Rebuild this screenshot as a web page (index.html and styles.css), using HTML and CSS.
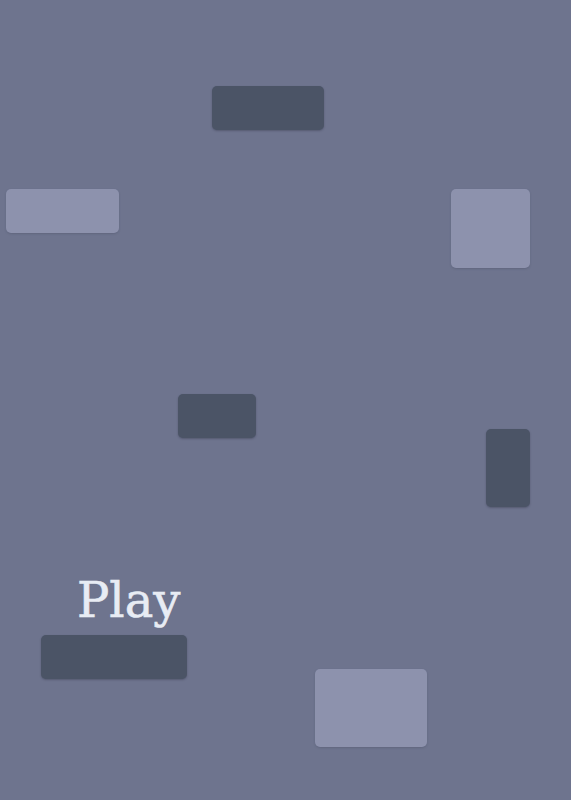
FILE: index.html
```html
<!DOCTYPE html>
<html lang="en">
<head>
  <meta charset="UTF-8">
  <title>Blocks</title>
  <link rel="stylesheet" href="styles.css">
</head>
<body>
  <div class="board">
    <div class="piece dark" style="left:212px; top:86px; width:112px; height:44px;"></div>
    <div class="piece light" style="left:6px; top:189px; width:113px; height:44px;"></div>
    <div class="piece light" style="left:451px; top:189px; width:79px; height:79px;"></div>
    <div class="piece dark" style="left:178px; top:394px; width:78px; height:44px;"></div>
    <div class="piece dark" style="left:486px; top:429px; width:44px; height:78px;"></div>
    <div class="piece light" style="left:315px; top:669px; width:112px; height:78px;"></div>

    <div class="start">
      <div class="start-label">Play</div>
      <div class="piece dark start-bar"></div>
    </div>
  </div>
</body>
</html>
```

FILE: styles.css
```css
body {
  margin: 0;
  background: #6e748e;
  font-family: 'DejaVu Serif', 'Liberation Serif', serif;
}
.board {
  position: relative;
  width: 571px;
  height: 800px;
  overflow: hidden;
}
.piece {
  position: absolute;
  border-radius: 5px;
  box-sizing: border-box;
}
.piece.dark {
  background: #4b5466;
  box-shadow: 0 1px 2px rgba(40, 44, 60, 0.35);
}
.piece.light {
  background: #8d92ad;
  box-shadow: 0 1px 2px rgba(60, 64, 84, 0.25);
}
.start {
  position: absolute;
  left: 41px;
  top: 572px;
  width: 146px;
}
.start-label {
  color: #e8ecf4;
  font-size: 48px;
  line-height: 56px;
  padding-left: 36px;
  white-space: nowrap;
  -webkit-text-stroke: 0.6px #e8ecf4;
}
.start-bar {
  position: static;
  width: 146px;
  height: 44px;
  margin-top: 7px;
}
```
